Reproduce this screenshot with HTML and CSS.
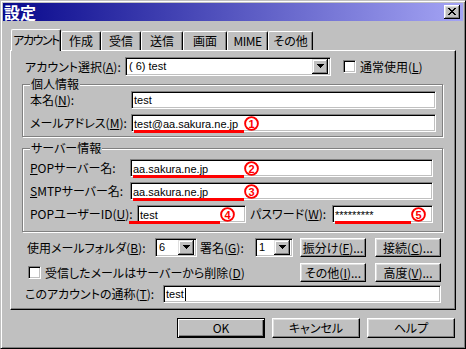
FILE: index.html
```html
<!DOCTYPE html>
<html>
<head>
	<meta charset="utf-8">
	<title>設定</title>
	<link rel="stylesheet" href="styles.css">
</head>
<body>
<div class="dlg">
	<div class="title">
		<span class="title-text">設定</span>
		<div class="close">
			<svg width="8" height="7" viewBox="0 0 8 7"><path d="M0 0h2v1h-2zM6 0h2v1h-2zM1 1h2v1h-2zM5 1h2v1h-2zM2 2h4v1h-4zM3 3h2v1h-2zM2 4h4v1h-4zM1 5h2v1h-2zM5 5h2v1h-2zM0 6h2v1h-2zM6 6h2v1h-2z"/></svg>
		</div>
	</div>
	<div class="body">
		<div class="tabs">
			<div class="tab on t1">アカウント</div>
			<div class="tab t2">作成</div>
			<div class="tab t3">受信</div>
			<div class="tab t4">送信</div>
			<div class="tab t5">画面</div>
			<div class="tab t6">MIME</div>
			<div class="tab t7">その他</div>
		</div>
		<div class="panel">
			<div class="row acct">
				<span class="lbl-acct">アカウント選択(<u>A</u>):</span>
				<div class="combo c-acct">
					<span class="val">( 6) test</span>
					<span class="drop"><svg width="7" height="4" viewBox="0 0 7 4"><path d="M0 0h7v1h-1v1h-1v1h-1v1h-1v-1h-1v-1h-1v-1h-1z"/></svg></span>
				</div>
				<span class="chk chk-normal"><span class="box"></span>通常使用(<u>L</u>)</span>
			</div>

			<div class="grp g1">
				<div class="grp-title">個人情報</div>
				<div class="frow">
					<span class="flbl w101">本名(<u>N</u>):</span>
					<div class="field w305">test</div>
				</div>
				<div class="frow gap">
					<span class="flbl w101">メールアドレス(<u>M</u>):</span>
					<div class="field w305"><span class="mark" style="width:110px">test@aa.sakura.ne.jp</span><svg class="num" width="15" height="15" viewBox="0 0 15 15"><circle cx="7.5" cy="7.5" r="6.4"/><text x="7.5" y="11.6">1</text></svg></div>
				</div>
			</div>

			<div class="grp g2">
				<div class="grp-title">サーバー情報</div>
				<div class="frow first">
					<span class="flbl w100"><u>P</u>OPサーバー名:</span>
					<div class="field w303"><span class="mark" style="width:111px">aa.sakura.ne.jp</span><svg class="num" width="15" height="15" viewBox="0 0 15 15"><circle cx="7.5" cy="7.5" r="6.4"/><text x="7.5" y="11.6">2</text></svg></div>
				</div>
				<div class="frow gap">
					<span class="flbl w100"><u>S</u>MTPサーバー名:</span>
					<div class="field w303"><span class="mark" style="width:111px">aa.sakura.ne.jp</span><svg class="num" width="15" height="15" viewBox="0 0 15 15"><circle cx="7.5" cy="7.5" r="6.4"/><text x="7.5" y="11.6">3</text></svg></div>
				</div>
				<div class="frow gap">
					<span class="flbl w107">POPユーザーID(<u>U</u>):</span>
					<div class="field w109"><span class="mark pull" style="width:91px">test</span><svg class="num" width="15" height="15" viewBox="0 0 15 15"><circle cx="7.5" cy="7.5" r="6.4"/><text x="7.5" y="11.6">4</text></svg></div>
					<span class="flbl w82 pw">パスワード(<u>W</u>):</span>
					<div class="field w101"><span class="mark" style="width:76px">*********</span><svg class="num" width="15" height="15" viewBox="0 0 15 15"><circle cx="7.5" cy="7.5" r="6.4"/><text x="7.5" y="11.6">5</text></svg></div>
				</div>
			</div>

			<div class="row folder">
				<span class="lbl-folder">使用メールフォルダ(<u>B</u>):</span>
				<div class="combo c-num">
					<span class="val">6</span>
					<span class="drop"><svg width="7" height="4" viewBox="0 0 7 4"><path d="M0 0h7v1h-1v1h-1v1h-1v1h-1v-1h-1v-1h-1v-1h-1z"/></svg></span>
				</div>
				<span class="lbl-sig">署名(<u>G</u>):</span>
				<div class="combo c-sig">
					<span class="val">1</span>
					<span class="drop"><svg width="7" height="4" viewBox="0 0 7 4"><path d="M0 0h7v1h-1v1h-1v1h-1v1h-1v-1h-1v-1h-1v-1h-1z"/></svg></span>
				</div>
				<div class="pbtns">
					<div class="btn pbtn">振分け(<u>F</u>)...</div>
					<div class="btn pbtn">接続(<u>C</u>)...</div>
				</div>
			</div>

			<div class="row del">
				<span class="chk chk-del"><span class="box"></span>受信したメールはサーバーから削除(<u>D</u>)</span>
				<div class="pbtns">
					<div class="btn pbtn">その他(<u>I</u>)...</div>
					<div class="btn pbtn">高度(<u>V</u>)...</div>
				</div>
			</div>

			<div class="row nick">
				<span class="lbl-nick">このアカウントの通称(<u>T</u>):</span>
				<div class="field w278">test<span class="caret"></span></div>
			</div>
		</div>

		<div class="btns">
			<div class="btn dbtn def">OK</div>
			<div class="btn dbtn">キャンセル</div>
			<div class="btn dbtn">ヘルプ</div>
		</div>
	</div>
</div>
</body>
</html>
```

FILE: styles.css
```css
body {
	margin: 0;
	padding: 0;
	background-color: #c0c0c0;
	font-family: "Noto Sans CJK JP", "Liberation Sans", sans-serif;
	font-size: 12px;
	color: #000000;
	font-feature-settings: "palt";
}
u {
	text-underline-offset: 1px;
}

/* window frame */
.dlg {
	width: 466px;
	height: 349px;
	box-sizing: border-box;
	border: 1px solid;
	border-color: #c0c0c0 #000000 #000000 #c0c0c0;
	box-shadow: inset 1px 1px #ffffff, inset -1px -1px #808080;
	padding: 2px;
	display: flex;
	flex-direction: column;
}
.title {
	height: 18px;
	display: flex;
	align-items: center;
	justify-content: space-between;
	padding: 0 3px 0 1px;
	background: linear-gradient(to right, #08088c, #a4a4f4);
}
.title-text {
	color: #ffffff;
	font-weight: bold;
	font-size: 16px;
	line-height: 18px;
}
.close {
	width: 16px;
	height: 14px;
	box-sizing: border-box;
	background-color: #c0c0c0;
	box-shadow: inset -1px -1px #000000, inset 1px 1px #ffffff, inset -2px -2px #808080, inset 2px 2px #dfdfdf;
	display: flex;
	align-items: center;
	justify-content: center;
	padding: 0 1px 1px 0;
}

.body {
	padding: 8px 7px 0 7px;
	display: flex;
	flex-direction: column;
}

/* tabs */
.tabs {
	height: 22px;
	margin-bottom: -1px;
	padding-left: 1px;
	display: flex;
	align-items: flex-end;
	position: relative;
	z-index: 1;
}
.tab {
	height: 19px;
	margin-bottom: 1px;
	box-sizing: border-box;
	border-top: 1px solid #ffffff;
	border-left: 1px solid #ffffff;
	border-right: 1px solid #000000;
	border-radius: 2px 2px 0 0;
	box-shadow: inset -1px 0 #808080;
	line-height: 17px;
	text-align: center;
	white-space: nowrap;
	background-color: #c0c0c0;
}
.tab.on {
	height: 22px;
	margin-bottom: 0;
	line-height: 20px;
	letter-spacing: -1.5px;
}
.t1 { width: 50px; }
.t2 { width: 40px; }
.t3 { width: 40px; }
.t4 { width: 42px; }
.t5 { width: 44px; }
.t6 { width: 41px; }
.t7 { width: 45px; }
.t6 {
	letter-spacing: -0.5px;
}

/* page */
.panel {
	height: 260px;
	box-sizing: border-box;
	border: 1px solid;
	border-color: #ffffff #000000 #000000 #ffffff;
	box-shadow: inset -1px -1px #808080;
	padding-top: 6px;
	display: flex;
	flex-direction: column;
}
.row {
	display: flex;
	align-items: center;
	height: 19px;
	line-height: 16px;
}
.acct {
	margin-left: 14px;
}
.lbl-acct {
	width: 100px;
}

.combo {
	height: 19px;
	box-sizing: border-box;
	background-color: #ffffff;
	border: 1px solid;
	border-color: #808080 #ffffff #ffffff #808080;
	box-shadow: inset 1px 1px #000000, inset -1px -1px #c0c0c0;
	padding: 2px;
	display: flex;
	align-items: center;
	font-family: "Liberation Sans", sans-serif;
	font-size: 11px;
}
.combo .val {
	flex: 1;
	padding-left: 1px;
	line-height: 15px;
}
.drop {
	width: 16px;
	height: 15px;
	box-sizing: border-box;
	background-color: #c0c0c0;
	box-shadow: inset -1px -1px #000000, inset 1px 1px #dfdfdf, inset -2px -2px #808080, inset 2px 2px #ffffff;
	display: flex;
	align-items: center;
	justify-content: center;
	padding-bottom: 1px;
}
.c-acct {
	width: 206px;
}
.c-num {
	width: 42px;
}
.c-sig {
	width: 38px;
}

.chk {
	display: flex;
	align-items: center;
}
.box {
	width: 13px;
	height: 13px;
	box-sizing: border-box;
	background-color: #ffffff;
	border: 1px solid;
	border-color: #808080 #ffffff #ffffff #808080;
	box-shadow: inset 1px 1px #000000, inset -1px -1px #c0c0c0;
	margin-right: 4px;
}
.chk-normal {
	margin-left: 12px;
}
.chk-del {
	margin-left: 17px;
}

/* group boxes */
.grp {
	margin-left: 11px;
	width: 421px;
	box-sizing: border-box;
	border: 1px solid #808080;
	box-shadow: inset 1px 1px #ffffff, 1px 1px #ffffff;
	padding: 0 0 4px 7px;
}
.g1 {
	margin-top: 8px;
	height: 53px;
}
.g2 {
	margin-top: 11px;
	height: 84px;
	padding-bottom: 8px;
}
.grp-title {
	margin: -8px 0 0 0;
	height: 14px;
	line-height: 14px;
	width: fit-content;
	padding: 0 1px;
	background-color: #c0c0c0;
}
.frow {
	display: flex;
	align-items: center;
	height: 18px;
	line-height: 16px;
}
.frow.gap {
	margin-top: 5px;
}
.frow.first {
	margin-top: 4px;
}
.w100 { width: 100px; }
.w101 { width: 101px; }
.w107 { width: 107px; }
.w82 { width: 82px; }
.pw {
	margin-left: 4px;
}

.field {
	height: 18px;
	box-sizing: border-box;
	background-color: #ffffff;
	border: 1px solid;
	border-color: #808080 #ffffff #ffffff #808080;
	box-shadow: inset 1px 1px #000000, inset -1px -1px #c0c0c0;
	padding: 0 2px;
	display: flex;
	align-items: center;
	font-family: "Liberation Sans", sans-serif;
	font-size: 11px;
	line-height: 14px;
}
.w305 { width: 305px; }
.w303 { width: 303px; }
.w109 { width: 109px; }
.w101.field { width: 101px; }
.w278 { width: 278px; }

/* red notes drawn over the screenshot */
.mark {
	display: inline-block;
	height: 15px;
	box-sizing: border-box;
	border-bottom: 3px solid #ff0000;
	line-height: 12px;
	margin-top: 4px;
	white-space: nowrap;
}
.mark.pull {
	margin-left: -11px;
	padding-left: 11px;
}
.num {
	flex: none;
	margin-top: 1px;
	margin-left: 0;
}
.num circle {
	fill: #ffffff;
	stroke: #ff0000;
	stroke-width: 1.9;
}
.num text {
	fill: #ff0000;
	font-family: "Liberation Sans", sans-serif;
	font-weight: bold;
	font-size: 11px;
	text-anchor: middle;
}
.caret {
	display: inline-block;
	width: 1px;
	height: 13px;
	background-color: #000000;
	margin-left: 1px;
}

.folder {
	margin-top: 6px;
	margin-left: 16px;
}
.lbl-folder {
	width: 128px;
}
.lbl-sig {
	width: 55px;
	margin-left: 3px;
}
.pbtns {
	display: flex;
	gap: 9px;
	margin-left: auto;
	margin-right: 14px;
}
.del {
	margin-top: 6px;
}
.nick {
	margin-top: 3px;
	margin-left: 14px;
	height: 18px;
}
.lbl-nick {
	width: 138px;
}

/* buttons */
.btn {
	background-color: #c0c0c0;
	box-sizing: border-box;
	border: 1px solid;
	border-color: #ffffff #000000 #000000 #ffffff;
	box-shadow: inset -1px -1px #808080, inset 1px 1px #dfdfdf;
	display: flex;
	align-items: center;
	justify-content: center;
	line-height: 16px;
}
.pbtn {
	width: 66px;
	height: 19px;
}
.btns {
	margin-top: 8px;
	display: flex;
	justify-content: flex-end;
	gap: 7px;
	padding-right: 1px;
}
.dbtn {
	width: 88px;
	height: 20px;
}
.btn.def {
	border-color: #000000;
	box-shadow: inset 1px 1px #ffffff, inset -1px -1px #000000, inset -2px -2px #808080;
}
```
